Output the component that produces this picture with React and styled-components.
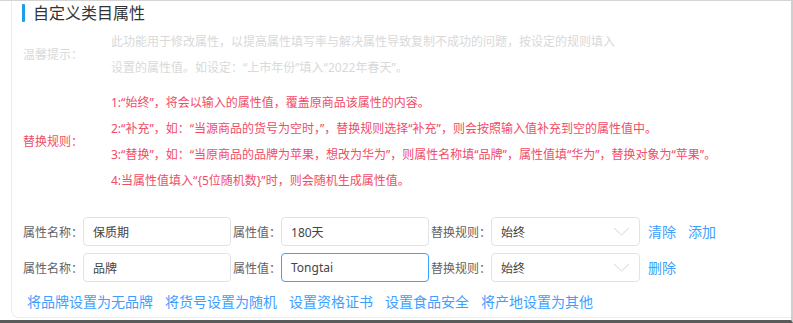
import React from 'react';
import styled, { createGlobalStyle } from 'styled-components';

const GlobalStyle = createGlobalStyle`
  html, body {
    margin: 0;
    padding: 0;
    background: #fff;
  }
  body {
    font-family: "Noto Sans", "Noto Sans CJK SC", sans-serif;
  }
`;

const Frame = styled.div`
  width: 793px;
  height: 323px;
  box-sizing: border-box;
  border-top: 1px solid #d4d4d4;
  border-right: 2px solid #cfcfcf;
  border-bottom: 3px solid #5a5a5a;
  padding: 0 0 2px 11px;
  overflow: hidden;
`;

const Card = styled.div`
  height: 100%;
  box-sizing: border-box;
  border-left: 1px solid #ececec;
  border-bottom: 1px solid #ececec;
  border-bottom-left-radius: 8px;
  padding: 2px 0 0 10px;
`;

const Title = styled.h2`
  display: flex;
  align-items: center;
  gap: 8px;
  margin: 0;
  height: 20px;
  font-size: 16px;
  font-weight: normal;
  color: #333;
  line-height: 20px;

  &::before {
    content: '';
    width: 3px;
    height: 18px;
    background: #1a9fe8;
    border-radius: 1px;
  }
`;

const InfoBlock = styled.div`
  display: grid;
  grid-template-columns: 88px 1fr;
  align-items: center;
  margin-top: ${p => p.$top}px;
  padding-left: 1px;
  font-size: 12px;
  line-height: 26px;
  color: ${p => p.$color};
`;

const Lines = styled.div`
  display: flex;
  flex-direction: column;
`;

const Line = styled.div`
  white-space: nowrap;
`;

const FormRows = styled.div`
  display: flex;
  flex-direction: column;
  gap: 7px;
  margin-top: 23px;
  padding-left: 1px;
`;

const Row = styled.div`
  display: flex;
  align-items: center;
  height: 29px;
`;

const Field = styled.label`
  display: flex;
  align-items: center;
  margin-right: 2px;
  font-size: 12px;
  color: #606266;
  white-space: nowrap;
`;

const Box = styled.div`
  display: flex;
  align-items: center;
  justify-content: space-between;
  width: ${p => p.$w}px;
  height: 29px;
  box-sizing: border-box;
  padding: 0 9px 0 9px;
  border: 1px solid ${p => (p.$focus ? '#409eff' : '#e1e3e8')};
  border-radius: 4px;
  background: #fff;
  font-size: 12px;
  color: #444;
`;

const Chevron = () => (
  <svg width="17" height="9" viewBox="0 0 17 9">
    <polyline points="1,1 8.5,8 16,1" fill="none" stroke="#d2d5db" strokeWidth="1" />
  </svg>
);

const Actions = styled.div`
  display: flex;
  gap: 12px;
  margin-left: 6px;
`;

const Link = styled.a`
  font-size: 14px;
  line-height: 20px;
  color: #409eff;
  cursor: pointer;
  white-space: nowrap;
`;

const QuickLinks = styled.div`
  display: flex;
  gap: 12px;
  margin-top: 10px;
  padding-left: 5px;
`;

const tips = [
  '此功能用于修改属性，以提高属性填写率与解决属性导致复制不成功的问题，按设定的规则填入',
  '设置的属性值。如设定：“上市年份”填入“2022年春天”。',
];

const rules = [
  '1:“始终”，将会以输入的属性值，覆盖原商品该属性的内容。',
  '2:“补充”，如：“当源商品的货号为空时，”，替换规则选择“补充”，则会按照输入值补充到空的属性值中。',
  '3:“替换”，如：“当原商品的品牌为苹果，想改为华为”，则属性名称填“品牌”，属性值填“华为”，替换对象为“苹果”。',
  '4:当属性值填入“{5位随机数}”时，则会随机生成属性值。',
];

const rows = [
  { name: '保质期', value: '180天', rule: '始终', actions: ['清除', '添加'] },
  { name: '品牌', value: 'Tongtai', rule: '始终', actions: ['删除'], focus: true },
];

const quick = ['将品牌设置为无品牌', '将货号设置为随机', '设置资格证书', '设置食品安全', '将产地设置为其他'];

export default function App() {
  return (
    <>
      <GlobalStyle />
      <Frame>
        <Card>
          <Title>自定义类目属性</Title>

          <InfoBlock $top={6} $color="#d9d9d9">
            <span>温馨提示：</span>
            <Lines>
              {tips.map(t => <Line key={t}>{t}</Line>)}
            </Lines>
          </InfoBlock>

          <InfoBlock $top={9} $color="#f04c68">
            <span>替换规则：</span>
            <Lines>
              {rules.map(r => <Line key={r}>{r}</Line>)}
            </Lines>
          </InfoBlock>

          <FormRows>
            {rows.map(r => (
              <Row key={r.name}>
                <Field>属性名称：<Box $w={148}>{r.name}</Box></Field>
                <Field>属性值：<Box $w={148} $focus={r.focus}>{r.value}</Box></Field>
                <Field>替换规则：<Box $w={149}>{r.rule}<Chevron /></Box></Field>
                <Actions>
                  {r.actions.map(a => <Link key={a}>{a}</Link>)}
                </Actions>
              </Row>
            ))}
          </FormRows>

          <QuickLinks>
            {quick.map(q => <Link key={q}>{q}</Link>)}
          </QuickLinks>
        </Card>
      </Frame>
    </>
  );
}
